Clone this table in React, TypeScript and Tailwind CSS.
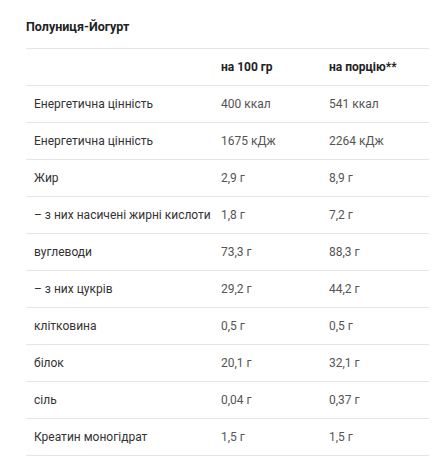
const ROWS: [string, string, string][] = [
  ['Енергетична цінність', '400 ккал', '541 ккал'],
  ['Енергетична цінність', '1675 кДж', '2264 кДж'],
  ['Жир', '2,9 г', '8,9 г'],
  ['– з них насичені жирні кислоти', '1,8 г', '7,2 г'],
  ['вуглеводи', '73,3 г', '88,3 г'],
  ['– з них цукрів', '29,2 г', '44,2 г'],
  ['клітковина', '0,5 г', '0,5 г'],
  ['білок', '20,1 г', '32,1 г'],
  ['сіль', '0,04 г', '0,37 г'],
  ['Креатин моногідрат', '1,5 г', '1,5 г'],
]

export default function App() {
  return (
    <div
      className="min-h-[458px] bg-white px-[26px] pt-[19px] text-[#333]"
      style={{ fontFamily: 'Roboto, "Noto Sans", sans-serif' }}
    >
      <h3 className="text-[12.5px] font-bold leading-[16px] text-[#222]">
        Полуниця-Йогурт
      </h3>
      <table className="mt-[13px] w-[403px] table-fixed border-collapse text-[12px]">
        <colgroup>
          <col className="w-[187px]" />
          <col className="w-[108px]" />
          <col className="w-[108px]" />
        </colgroup>
        <thead>
          <tr className="h-[37px] border-y border-[#e5e5e5] text-left text-[#222]">
            <th className="px-2" />
            <th className="px-2 font-bold">на 100 гр</th>
            <th className="px-2 font-bold">на порцію**</th>
          </tr>
        </thead>
        <tbody>
          {ROWS.map(([label, per100, perServing], i) => (
            <tr key={i} className="h-[37px] border-b border-[#e5e5e5]">
              <td className="whitespace-nowrap px-2 text-[#333]">{label}</td>
              <td className="px-2 text-[#555]">{per100}</td>
              <td className="px-2 text-[#555]">{perServing}</td>
            </tr>
          ))}
        </tbody>
      </table>
    </div>
  )
}
